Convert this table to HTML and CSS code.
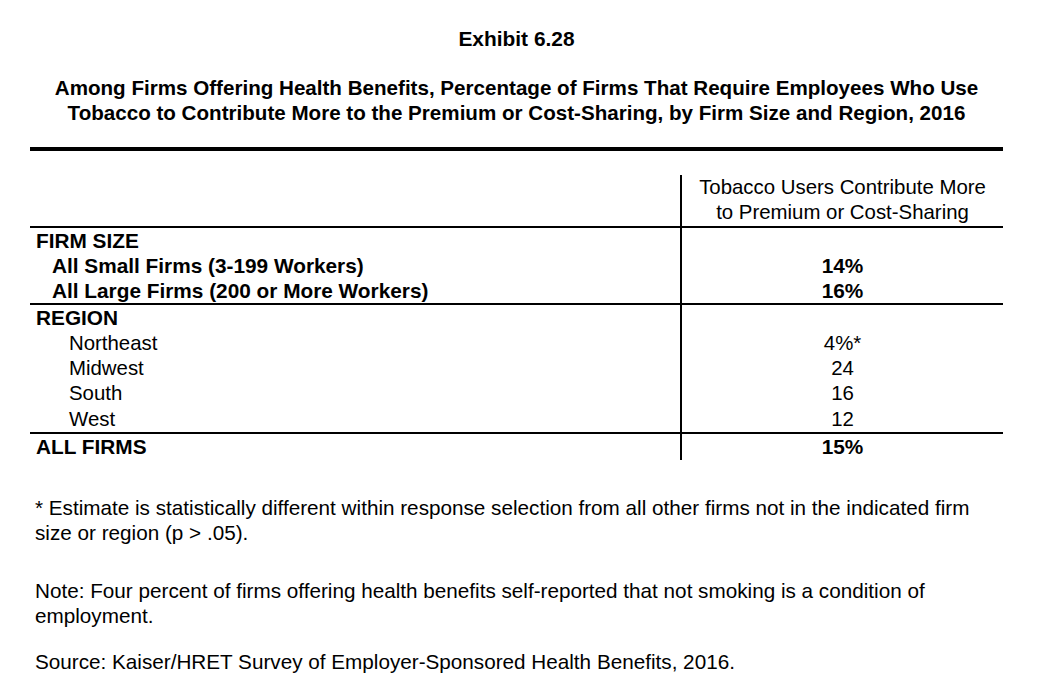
FILE: index.html
```html
<!DOCTYPE html>
<html lang="en">
<head>
<meta charset="utf-8">
<title>Exhibit 6.28</title>
<link rel="stylesheet" href="styles.css">
</head>
<body>
<div class="page">
  <h1 class="exhibit">Exhibit 6.28</h1>
  <h2 class="title">Among Firms Offering Health Benefits, Percentage of Firms That Require Employees Who Use<br>Tobacco to Contribute More to the Premium or Cost-Sharing, by Firm Size and Region, 2016</h2>
  <div class="rule-thick"></div>
  <table class="data">
    <colgroup>
      <col class="col-label">
      <col class="col-val">
    </colgroup>
    <thead>
      <tr class="head">
        <th class="label"></th>
        <th class="val">Tobacco Users Contribute More<br>to Premium or Cost-Sharing</th>
      </tr>
    </thead>
    <tbody class="group">
      <tr><td class="label bold">FIRM SIZE</td><td class="val"></td></tr>
      <tr><td class="label bold sub">All Small Firms (3-199 Workers)</td><td class="val bold">14%</td></tr>
      <tr><td class="label bold sub">All Large Firms (200 or More Workers)</td><td class="val bold">16%</td></tr>
    </tbody>
    <tbody class="group region-group">
      <tr><td class="label bold">REGION</td><td class="val"></td></tr>
      <tr><td class="label region">Northeast</td><td class="val">4%*</td></tr>
      <tr><td class="label region">Midwest</td><td class="val">24</td></tr>
      <tr><td class="label region">South</td><td class="val">16</td></tr>
      <tr><td class="label region">West</td><td class="val">12</td></tr>
    </tbody>
    <tbody class="total">
      <tr><td class="label bold">ALL FIRMS</td><td class="val bold">15%</td></tr>
    </tbody>
  </table>
  <div class="notes">
    <p class="note-star">* Estimate is statistically different within response selection from all other firms not in the indicated firm size or region (p &gt; .05).</p>
    <p class="note-text">Note: Four percent of firms offering health benefits self-reported that not smoking is a condition of employment.</p>
    <p class="note-source">Source: Kaiser/HRET Survey of Employer-Sponsored Health Benefits, 2016.</p>
  </div>
</div>
</body>
</html>
```

FILE: styles.css
```css
html, body {
  margin: 0;
  padding: 0;
  background: #ffffff;
}

body {
  font-family: "Liberation Sans", Arial, sans-serif;
  color: #000000;
  font-size: 20.4px;
  line-height: 25px;
}

.page {
  width: 973px;
  padding: 26px 0 0 30px;
}

.exhibit {
  margin: 0;
  font-size: 20.9px;
  line-height: 25px;
  font-weight: bold;
  text-align: center;
}

.title {
  margin: 24px 0 0 0;
  font-size: 20.6px;
  line-height: 25px;
  font-weight: bold;
  text-align: center;
}

.rule-thick {
  margin-top: 22px;
  height: 4px;
  background: #000000;
}

.data {
  width: 100%;
  margin-top: 24px;
  border-collapse: collapse;
  table-layout: fixed;
}

.col-label {
  width: 651px;
}

.data th,
.data td {
  padding: 0;
  height: 25px;
  font-size: 20.4px;
  line-height: 25px;
  vertical-align: middle;
}

.data th {
  font-weight: normal;
}

.data .label {
  text-align: left;
  padding-left: 6px;
}

.data .val {
  border-left: 2px solid #000000;
  text-align: center;
}

.data .head th {
  border-bottom: 2px solid #000000;
  padding-bottom: 1px;
}

.data .group tr:last-child td {
  border-bottom: 2px solid #000000;
}

.data .region-group td {
  height: 25.4px;
}

.data .total td {
  height: 25px;
  padding-bottom: 1px;
}

.bold {
  font-weight: bold;
}

.data td.bold {
  font-size: 20.8px;
}

.data .sub {
  padding-left: 22px;
}

.data .region {
  padding-left: 39px;
}

.notes {
  margin-top: 35px;
  padding-left: 5px;
  width: 960px;
}

.notes p {
  margin: 0;
  font-size: 20.7px;
  line-height: 25px;
}

.notes .note-star {
  margin-bottom: 33px;
}

.notes .note-text {
  margin-bottom: 21px;
}
```
